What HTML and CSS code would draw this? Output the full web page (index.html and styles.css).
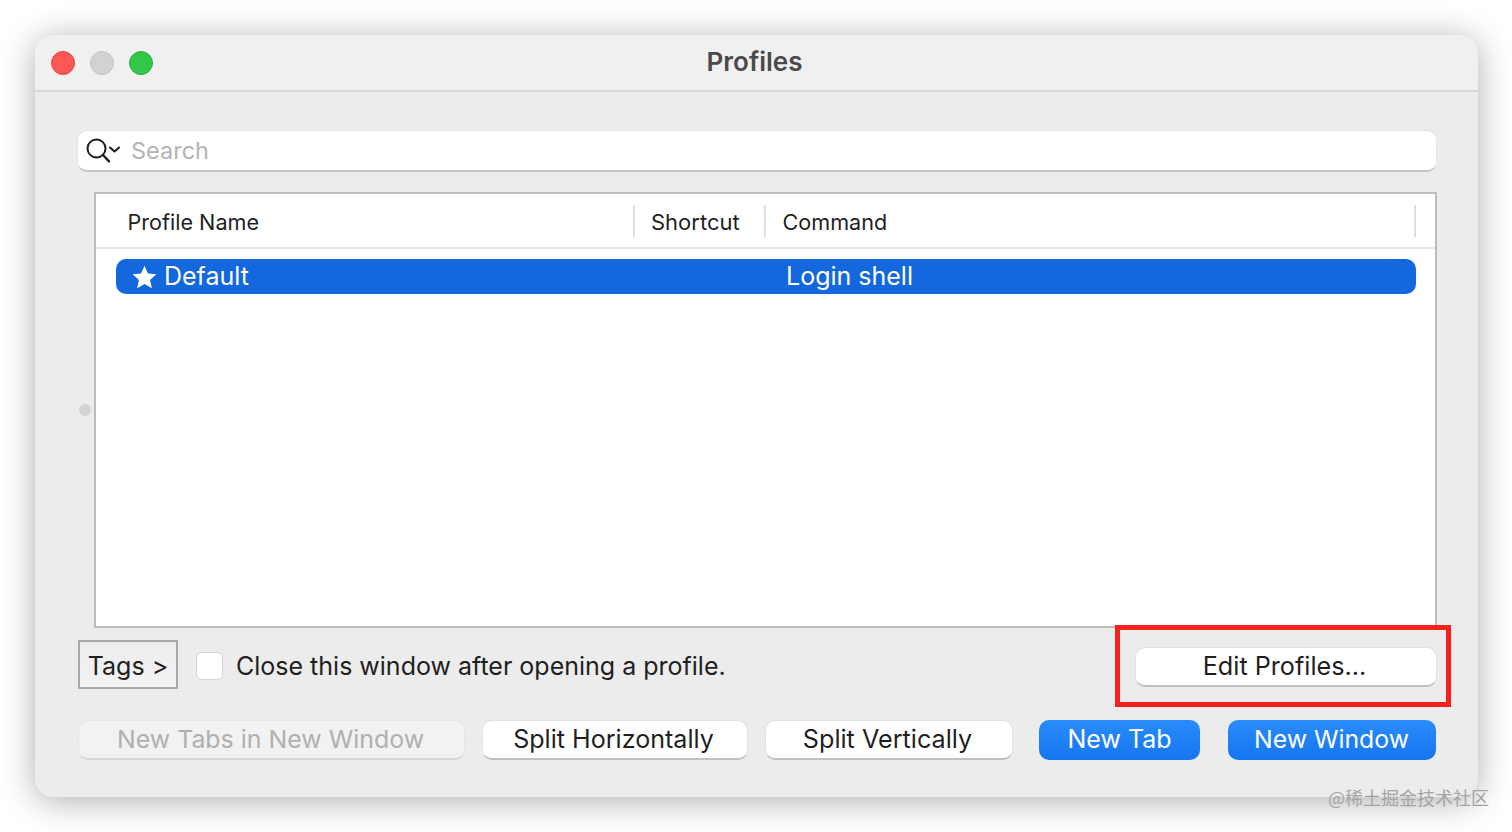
FILE: index.html
```html
<!DOCTYPE html>
<html lang="en">
<head>
    <meta charset="UTF-8">
    <title>Profiles</title>
    <link rel="stylesheet" href="styles.css">
</head>
<body>
    <div class="window">
        <div class="titlebar">
            <div class="lights">
                <span class="light light-red"></span>
                <span class="light light-gray"></span>
                <span class="light light-green"></span>
            </div>
            <div class="title">Profiles</div>
        </div>

        <div class="content">
            <div class="search">
                <svg class="search-icon" width="36" height="28" viewBox="0 0 36 28" fill="none" stroke="#1d1d1f">
                    <circle cx="10.5" cy="11.5" r="9" stroke-width="2"/>
                    <path d="M17 18l6 6.4" stroke-width="2.4" stroke-linecap="round"/>
                    <path d="M24 10.5l4.5 4 4.5-4" stroke-width="2.1" stroke-linecap="round" stroke-linejoin="round"/>
                </svg>
                <span class="search-text">Search</span>
            </div>

            <div class="list-area">
                <div class="handle"></div>
                <div class="list">
                    <div class="list-head">
                        <div class="col col-name">Profile Name</div>
                        <div class="col col-shortcut">Shortcut</div>
                        <div class="col col-command">Command</div>
                    </div>
                    <div class="list-row">
                        <div class="row-name">
                            <svg width="25" height="24" viewBox="0 0 24 23"><path fill="#fff" d="M12 .6l3.3 7.5 8.1.8-6.1 5.4 1.8 8-7.1-4.2-7.1 4.2 1.8-8L.6 8.9l8.1-.8z"/></svg>
                            Default
                        </div>
                        <div class="row-command">Login shell</div>
                    </div>
                </div>
            </div>

            <div class="options">
                <div class="tags">Tags &gt;</div>
                <div class="checkbox"></div>
                <div class="check-label">Close this window after opening a profile.</div>
                <div class="btn btn-edit">Edit Profiles...</div>
            </div>

            <div class="actions">
                <div class="btn btn-disabled btn-tabs">New Tabs in New Window</div>
                <div class="btn btn-horizontal">Split Horizontally</div>
                <div class="btn btn-vertical">Split Vertically</div>
                <div class="btn btn-primary btn-newtab">New Tab</div>
                <div class="btn btn-primary btn-newwindow">New Window</div>
            </div>
        </div>

        <div class="highlight"></div>
    </div>
    <div class="watermark">@稀土掘金技术社区</div>
</body>
</html>
```

FILE: styles.css
```css
* {
    margin: 0;
    padding: 0;
    box-sizing: border-box;
}

html, body {
    height: 100%;
    overflow: hidden;
}

body {
    position: relative;
    padding: 35px 34px 35px 35px;
    background: #fff;
    font-family: Inter, "Noto Sans", sans-serif;
    color: #1f1f1f;
}

.window {
    position: relative;
    height: 762px;
    background: #ececec;
    border-radius: 18px;
    box-shadow: 0 4px 34px rgba(0, 0, 0, 0.32);
}

.titlebar {
    position: relative;
    height: 57px;
    display: flex;
    align-items: center;
    justify-content: center;
    background: #f0f0f0;
    border-bottom: 2px solid #d6d6d6;
    border-radius: 18px 18px 0 0;
}

.lights {
    position: absolute;
    left: 16px;
    top: 16px;
    display: flex;
    gap: 15.5px;
}

.light {
    width: 24px;
    height: 24px;
    border-radius: 50%;
    margin-left: -0.3px;
}

.light-red {
    background: #fc5753;
    border: 1px solid #df4744;
}

.light-gray {
    background: #d2d2d2;
    border: 1px solid #c2c2c2;
}

.light-green {
    background: #33c748;
    border: 1px solid #2bb03c;
}

.title {
    font-size: 26px;
    font-weight: 600;
    color: #4a4a4a;
    margin-top: -2px;
    margin-right: 4px;
}

.content {
    padding: 38px 42px 0 43px;
}

.search {
    height: 42px;
    margin: 0 -1px;
    display: flex;
    align-items: center;
    padding-left: 8px;
    background: #fff;
    border-radius: 10px;
    border: 1px solid #e4e4e4;
    border-bottom: 2px solid #c4c4c4;
}

.search-text {
    margin-left: 9px;
    margin-top: -1px;
    font-size: 23.5px;
    color: #b4b4b4;
}

.list-area {
    position: relative;
    margin-top: 20px;
    padding-left: 16px;
}

.handle {
    position: absolute;
    left: 1px;
    top: 212px;
    width: 12px;
    height: 12px;
    border-radius: 50%;
    background: #d4d4d4;
}

.list {
    height: 436px;
    background: #fff;
    border: 2px solid #bcbcbc;
    margin-right: -1px;
}

.list-head {
    height: 55px;
    display: flex;
    align-items: center;
    border-bottom: 2px solid #e8e8e8;
    font-size: 21.6px;
}

.col {
    height: 32px;
    line-height: 34px;
    border-right: 2px solid #e0e0e0;
}

.col-name {
    width: 539px;
    padding-left: 31.5px;
}

.col-shortcut {
    width: 131px;
    padding-left: 16px;
    font-size: 22px;
}

.col-command {
    width: 650px;
    padding-left: 16.5px;
}

.list-row {
    height: 35px;
    margin: 10px 19px 0 19.5px;
    display: flex;
    align-items: center;
    background: #1268dc;
    border-radius: 10px;
    color: #fff;
    font-size: 25px;
    line-height: 33px;
}

.row-name {
    width: 670.5px;
    display: flex;
    align-items: center;
    gap: 7px;
    padding-left: 16.5px;
}

.options {
    position: relative;
    height: 49px;
    margin-top: 12px;
    display: flex;
    align-items: center;
}

.tags {
    width: 100px;
    height: 49px;
    line-height: 49px;
    text-align: center;
    font-size: 25px;
    border: 2px solid #a9a9a9;
    background: linear-gradient(#ececec, #f3f3f3);
}

.checkbox {
    width: 27px;
    height: 28px;
    margin-left: 18px;
    margin-top: 2px;
    background: #fff;
    border: 1px solid #d4d4d4;
    border-radius: 6px;
}

.check-label {
    margin-left: 13px;
    margin-top: 2px;
    font-size: 25px;
}

.btn {
    height: 40px;
    line-height: 37px;
    text-align: center;
    font-size: 25px;
    background: #fff;
    border-radius: 10px;
    border: 1px solid #e2e2e2;
    border-bottom: 2px solid #c0c0c0;
}

.btn-edit {
    width: 302px;
    margin-left: auto;
    margin-right: -1px;
    margin-top: 5px;
    padding-right: 3px;
    font-size: 25.2px;
}

.actions {
    margin-top: 31px;
    display: flex;
}

.btn-disabled {
    color: #b0b0b0;
    background: #f2f2f2;
    border-color: #e6e6e6;
    border-bottom-color: #d6d6d6;
    padding-right: 2px;
}

.btn-primary {
    color: #fff;
    background: linear-gradient(#2a8bfb, #1676f0);
    border: none;
    line-height: 38px;
}

.btn-tabs { width: 387px; font-size: 24.9px; }
.btn-horizontal { width: 266px; margin-left: 17px; padding-right: 3px; font-size: 25.1px; }
.btn-vertical { width: 248px; margin-left: 17px; padding-right: 3px; font-size: 25.2px; }
.btn-newtab { width: 161px; margin-left: 26px; }
.btn-newwindow { width: 208px; margin-left: 28px; padding-right: 1px; font-size: 24.8px; }

.highlight {
    position: absolute;
    left: 1080px;
    top: 590px;
    width: 336px;
    height: 82px;
    border: 5px solid #f5211c;
}

.watermark {
    position: absolute;
    left: 1328px;
    top: 785px;
    font-family: "Noto Sans CJK SC", sans-serif;
    font-size: 18px;
    line-height: 24px;
    color: #a4a4a4;
}
```
